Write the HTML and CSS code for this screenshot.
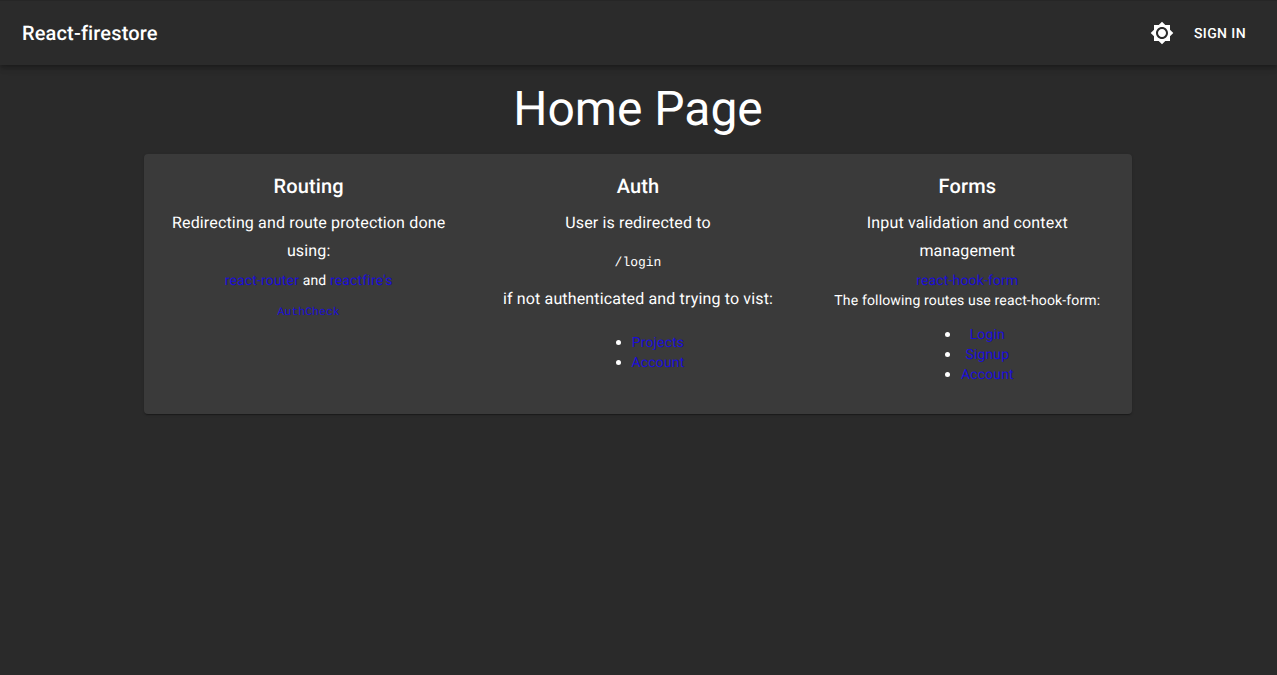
FILE: index.html
```html
<!DOCTYPE html>
<html lang="en">
<head>
<meta charset="utf-8">
<title>React-firestore</title>
<link rel="stylesheet" href="styles.css">
</head>
<body>
<header class="appbar">
  <div class="brand">React-firestore</div>
  <div class="actions">
    <svg class="theme-icon" viewBox="0 0 24 24" width="24" height="24"><path fill="#fff" d="M20 8.69V4h-4.69L12 .69 8.69 4H4v4.69L.69 12 4 15.31V20h4.69L12 23.31 15.31 20H20v-4.69L23.31 12 20 8.69zM12 18c-3.31 0-6-2.69-6-6s2.69-6 6-6 6 2.69 6 6-2.69 6-6 6zm0-10c-2.21 0-4 1.79-4 4s1.79 4 4 4 4-1.79 4-4-1.79-4-4-4z"/></svg>
    <a class="signin">SIGN IN</a>
  </div>
</header>
<main class="main">
  <h1 class="title">Home Page</h1>
  <section class="paper">
    <div class="col">
      <h2 class="heading">Routing</h2>
      <p class="lead">Redirecting and route protection done using:</p>
      <div class="small link-row"><a class="link">react-router</a> and <a class="link">reactfire's</a></div>
      <div class="code-row"><code class="code-link">AuthCheck</code></div>
    </div>
    <div class="col">
      <h2 class="heading">Auth</h2>
      <p class="lead">User is redirected to</p>
      <pre class="login">/login</pre>
      <p class="lead">if not authenticated and trying to vist:</p>
      <ul class="list auth-list">
        <li><a class="link">Projects</a></li>
        <li><a class="link">Account</a></li>
      </ul>
    </div>
    <div class="col">
      <h2 class="heading">Forms</h2>
      <p class="lead">Input validation and context management</p>
      <div class="small link-row"><a class="link">react-hook-form</a></div>
      <div class="small">The following routes use react-hook-form:</div>
      <ul class="list forms-list">
        <li><a class="link">Login</a></li>
        <li><a class="link">Signup</a></li>
        <li><a class="link">Account</a></li>
      </ul>
    </div>
  </section>
</main>
</body>
</html>
```
FILE: styles.css
```css
* { box-sizing: border-box; }
html, body { margin: 0; height: 100%; }
body {
  background: #2a2a2a;
  color: #fff;
  font-family: Roboto, "Liberation Sans", sans-serif;
  text-rendering: geometricPrecision;
  overflow: hidden;
}
.appbar {
  height: 65px;
  padding: 0 31px 0 22px;
  display: flex;
  align-items: center;
  justify-content: space-between;
  background: #2b2b2b;
  border-top: 1px solid #262626;
  box-shadow: 0 2px 4px -1px rgba(0,0,0,.2), 0 4px 5px 0 rgba(0,0,0,.14), 0 1px 10px 0 rgba(0,0,0,.12);
}
.brand { font-size: 20px; font-weight: 500; letter-spacing: .15px; line-height: 32px; }
.actions { display: flex; align-items: center; gap: 20px; }
.theme-icon { display: block; }
.signin { padding-top: 2px; font-size: 14px; font-weight: 500; letter-spacing: .4px; line-height: 24px; }
.main { display: flex; flex-direction: column; align-items: center; padding-right: 1px; }
.title {
  margin: 15px 0 16px;
  font-size: 48px;
  font-weight: 400;
  line-height: 58px;
  text-align: center;
}
.paper {
  width: 988px;
  height: 260px;
  display: grid;
  grid-template-columns: repeat(3, 1fr);
  background: #3a3a3a;
  border-radius: 4px;
  box-shadow: 0 2px 1px -1px rgba(0,0,0,.2), 0 1px 1px 0 rgba(0,0,0,.14), 0 1px 3px 0 rgba(0,0,0,.12);
}
.col { padding: 16px 20px 0; text-align: center; }
.heading { margin: 0 0 7px; font-size: 20px; font-weight: 500; line-height: 32px; letter-spacing: .15px; }
.lead { margin: 0; font-size: 16px; line-height: 28px; letter-spacing: .15px; }
.small { font-size: 14px; line-height: 20px; letter-spacing: .15px; }
.link-row { margin-top: 6px; }
.link { color: #1a0dd6; }
.code-row { margin-top: 11px; line-height: 16px; }
.code-link { color: #1a0dd6; font-family: "Liberation Mono", monospace; font-size: 11.5px; }
.login { margin: 18px 0 14px; font-family: "Liberation Mono", monospace; font-size: 13px; line-height: 16px; }
.list {
  width: fit-content;
  margin-left: auto;
  margin-right: auto;
  margin-bottom: 0;
  padding: 0 0 0 40px;
  font-size: 14px;
  line-height: 20px;
  letter-spacing: .15px;
}
.list li { height: 20px; }
.list li::marker { font-size: 15px; }
.auth-list { margin-top: 19px; }
.forms-list { margin-top: 13px; }
```
